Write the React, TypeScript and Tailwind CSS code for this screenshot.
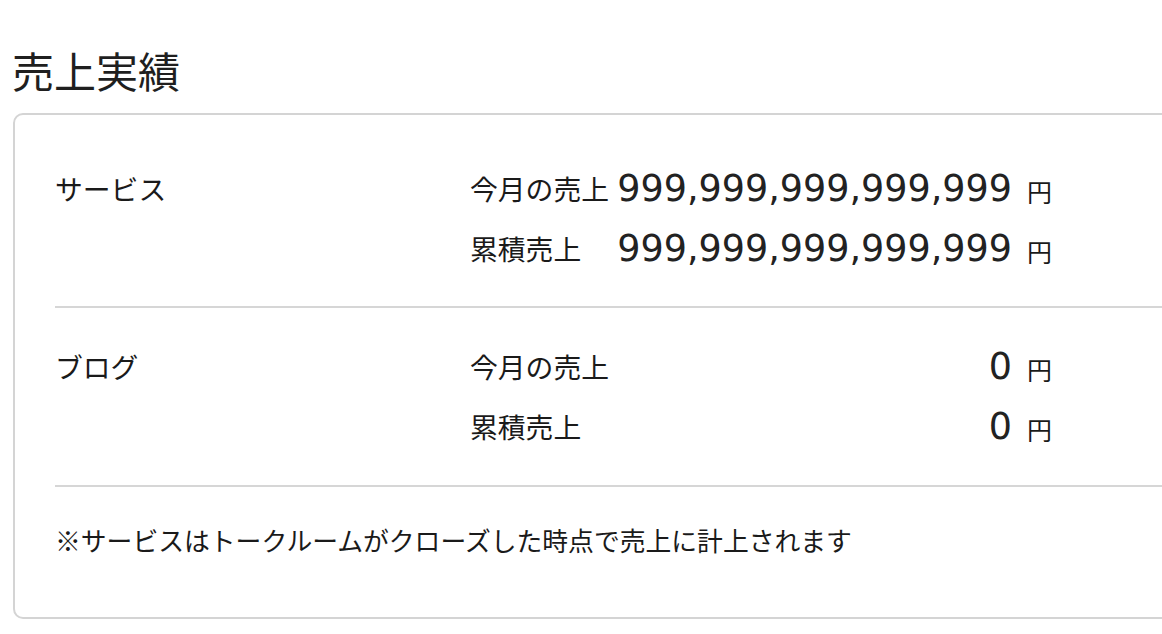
import React from "react";

const jp = "font-['Noto_Sans_CJK_JP',sans-serif]";
const num = "font-['DejaVu_Sans',sans-serif]";

type Row = { label: string; amount: string };

const sections: { name: string; rows: Row[] }[] = [
  {
    name: "サービス",
    rows: [
      { label: "今月の売上", amount: "999,999,999,999,999" },
      { label: "累積売上", amount: "999,999,999,999,999" },
    ],
  },
  {
    name: "ブログ",
    rows: [
      { label: "今月の売上", amount: "0" },
      { label: "累積売上", amount: "0" },
    ],
  },
];

const SalesSection = ({ name, rows, first }: { name: string; rows: Row[]; first?: boolean }) => {
  return (
    <div className={`flex border-b-2 border-[#d6d6d6] ${first ? "pt-[44px] pb-[27px]" : "pt-[29px] pb-[28px]"}`}>
      {/* section name */}
      <div className={`w-[415px] h-[60px] flex items-center text-[27.8px] leading-none text-[#1a1a1a] ${jp}`}>
        {name}
      </div>

      <div className="w-[582px] flex flex-col">
        {rows.map((r) => (
          <div key={r.label} className="h-[60px] flex items-center">
            <span className={`w-[148px] text-[27.8px] leading-none text-[#1a1a1a] ${jp}`}>{r.label}</span>
            <span className={`flex-1 text-right text-[36.5px] leading-none text-[#222] ${num}`}>{r.amount}</span>
            <span className={`ml-[15px] pt-[4px] text-[25px] leading-none text-[#1a1a1a] ${jp}`}>円</span>
          </div>
        ))}
      </div>
    </div>
  );
};

export default function App() {
  return (
    <div className="w-[1162px] h-[634px] overflow-hidden bg-white pl-[12px]">
      <h1 className={`pt-[49px] text-[42px] leading-none text-[#1f1f1f] ${jp}`}>売上実績</h1>

      <div className="mt-[22px] ml-[1px] w-[1250px] h-[506px] border-2 border-[#d4d4d4] rounded-[10px] px-[40px]">
        {sections.map((s, i) => (
          <SalesSection key={s.name} name={s.name} rows={s.rows} first={i === 0} />
        ))}

        {/* note */}
        <p className={`pt-[40px] text-[25.8px] leading-none text-[#1a1a1a] ${jp}`}>
          ※サービスはトークルームがクローズした時点で売上に計上されます
        </p>
      </div>
    </div>
  );
}
